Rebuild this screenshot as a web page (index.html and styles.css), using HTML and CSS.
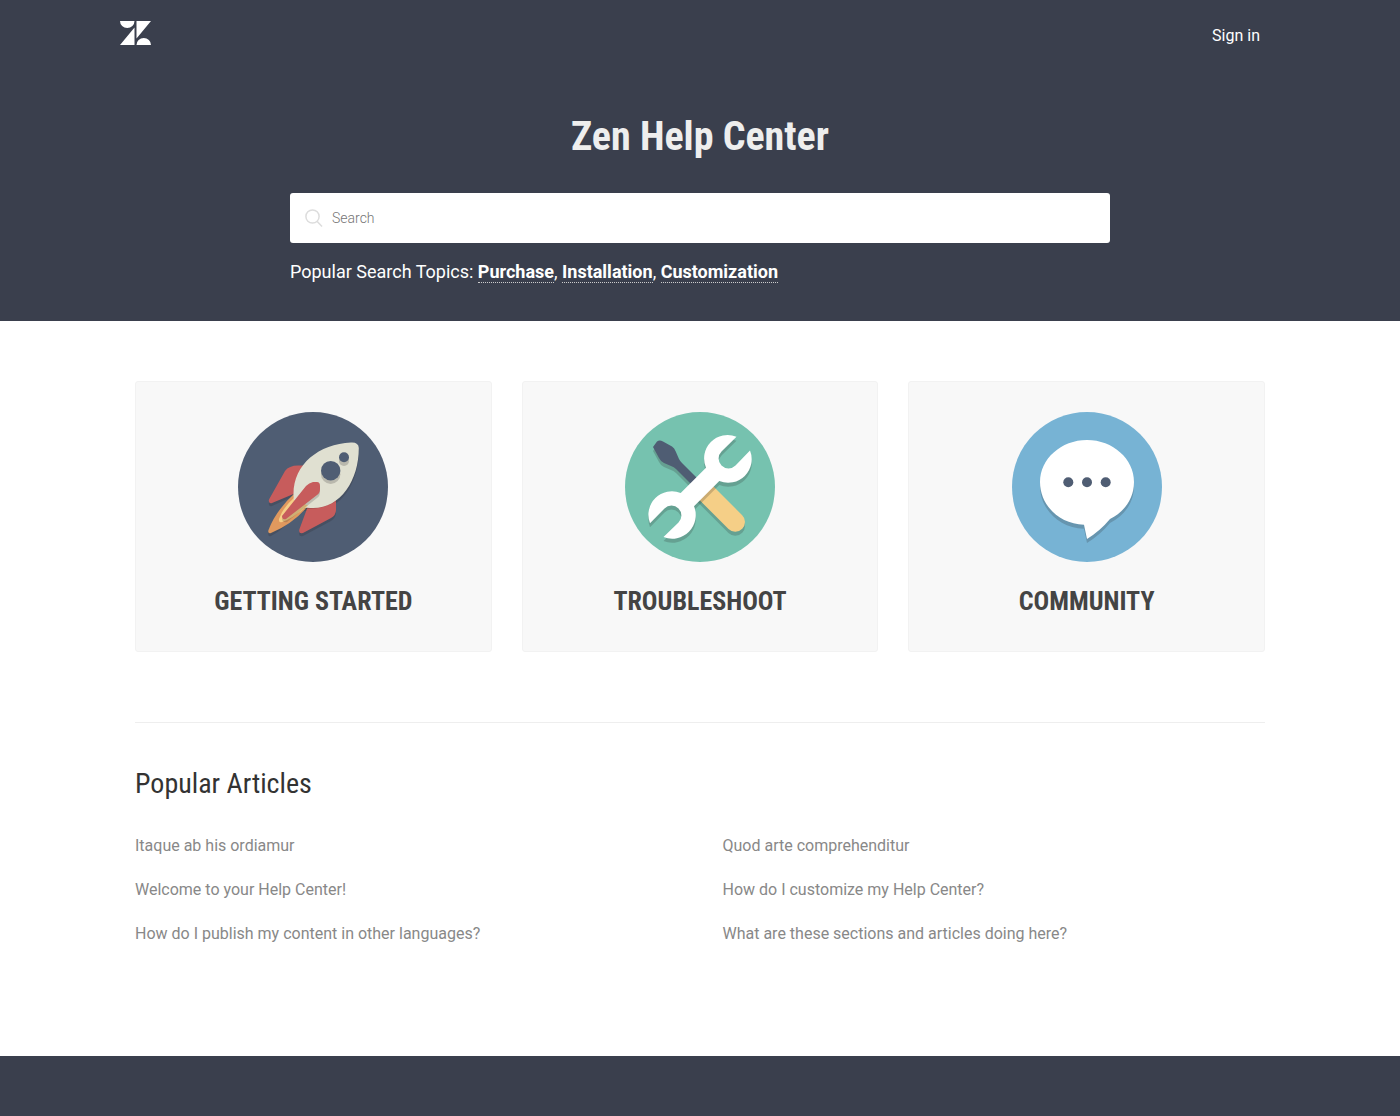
FILE: index.html
```html
<!DOCTYPE html>
<html lang="en">
<head>
<meta charset="utf-8">
<meta name="viewport" content="width=device-width, initial-scale=1">
<title>Zen Help Center</title>
<link rel="stylesheet" href="styles.css">
</head>
<body>
<header class="hero">
  <div class="topbar">
    <a class="logo" href="#" aria-label="Home">
      <svg width="32" height="26" viewBox="0 0 32 26" fill="#fff" aria-hidden="true">
        <path d="M0 1h14.500a7.250 7 0 0 1-14.500 0zM14.500 7.500V25H0zM16.500 1h14.500L16.500 18.500zM16.500 25a7.250 7 0 0 1 14.500 0z"/>
      </svg>
    </a>
    <a class="signin" href="#">Sign in</a>
  </div>
  <div class="hero-inner">
    <h1 class="hero-title">Zen Help Center</h1>
    <form class="search" role="search">
      <svg class="search-icon" width="18" height="18" viewBox="0 0 18 18" fill="none" stroke="#ddd" stroke-width="1.500" aria-hidden="true">
        <circle cx="7.500" cy="7.500" r="6.600"/><path d="M12 12.300l5 5.200"/>
      </svg>
      <input class="search-input" type="search" placeholder="Search" aria-label="Search">
    </form>
    <p class="topics">Popular Search Topics: <a href="#">Purchase</a>, <a href="#">Installation</a>, <a href="#">Customization</a></p>
  </div>
</header>

<main class="main">
  <nav class="cards" aria-label="Sections">
    <a class="card" href="#">
      <svg class="card-icon" viewBox="0 0 150 150" aria-hidden="true">
        <circle cx="75" cy="75" r="75" fill="#4f5d73"/>
        <g opacity=".2" transform="translate(0 3)" fill="#231f20">
          <path d="M64 53.500H57Q50 53.500 47 58L31 87.500Q30 92 34 91L58 80zM98 85V97Q98 103 93 106L65 121Q60 122 61.500 117L70 94z"/>
          <path d="M113 30.500Q120.500 30 120.800 36C120.800 68 103 96 75 96Q66 96.500 60 95Q46 115 33 121Q29.500 122 30.500 118Q38 98 55 83C55 52 81 32 113 30.500z"/>
        </g>
        <path fill="#c75c5c" d="M66 53.500H60Q51 53.500 47 59L31 87.500Q30 92 34 91L58 81zM98 84V98Q98 103 93 106L65 121Q60 122 61.500 117L70 94z"/>
        <path fill="#e0995e" d="M58 80Q38 98 30.500 118Q29.500 122 33 121Q55 112 71 93z"/>
        <path fill="#f5cf87" d="M57 85Q45 95 41 107Q40.500 111 44 110Q56 106 68 94z"/>
        <path fill="#231f20" opacity=".2" d="M56 84L56 90L61 94L67 97Q83 98 99 89L97 86z"/>
        <path fill="#e0e0d1" d="M113 30.500Q120.500 30 120.800 36C120.800 68 103 96 75 96Q67 96.500 58 94Q55.500 90 55.500 82C55.500 52 81 32 113 30.500z"/>
        <path fill="#f5cf87" d="M57 88L70 93.500L62 100L52 103L49 96z"/>
        <path fill="#231f20" opacity=".18" d="M75 73H79Q82 73 82 77V80Q82 84 79 86L49 110Q45 111 44 107L68 78Q71 74 75 73z"/>
        <path fill="#c75c5c" d="M75 70H79Q82 70 82 74V77Q82 81 79 83L48 107Q44 108 44 104L68 74Q71 71 75 70z"/>
        <g fill="#231f20" opacity=".2"><circle cx="92.700" cy="62.200" r="9.700"/><circle cx="106" cy="49" r="5"/></g>
        <g fill="#4f5d73"><circle cx="92.700" cy="58.700" r="9.700"/><circle cx="106" cy="45.300" r="5"/></g>
      </svg>
      <h2 class="card-title">GETTING STARTED</h2>
    </a>
    <a class="card" href="#">
      <svg class="card-icon" viewBox="0 0 150 150" aria-hidden="true">
        <defs>
          <path id="driver" d="M28 35L32 29.500Q34.500 27.500 38 29.500L47 34.500Q49.500 36 50.500 39L54 47Q55 49 57 51L76 70L70 76L51 57Q49 55 46 54L39 51Q36 50 34 46z"/>
          <path id="grip" d="M86 72L117 103A9.700 9.700 0 0 1 103.500 117L72.500 86z"/>
          <path id="wrench" d="M111.500 24.700L96.500 39.500A9.700 9.700 0 0 0 110.500 53.500L125 38.500A23.500 23.500 0 0 1 94.300 69L69 94.300A23.500 23.500 0 0 1 38.500 125L53.500 110.500A9.700 9.700 0 0 0 39.500 96.500L25 111.300A23.500 23.500 0 0 1 55.700 81L81 55.700A23.500 23.500 0 0 1 111.500 24.700z"/>
        </defs>
        <circle cx="75" cy="75" r="75" fill="#76c2af"/>
        <g fill="#231f20" opacity=".2" transform="translate(0 4)"><use href="#driver"/><use href="#grip"/></g>
        <use href="#driver" fill="#4f5d73"/>
        <use href="#grip" fill="#f5cf87"/>
        <use href="#wrench" fill="#231f20" opacity=".2" transform="translate(0 4)"/>
        <use href="#wrench" fill="#fff"/>
      </svg>
      <h2 class="card-title">TROUBLESHOOT</h2>
    </a>
    <a class="card" href="#">
      <svg class="card-icon" viewBox="0 0 150 150" aria-hidden="true">
        <defs>
          <path id="bubble" d="M75 28C101 28 122 47 122 70C122 87 112 100 98 107Q88 119 75 127L72 112.800C47 112 28 93 28 70C28 47 49 28 75 28z"/>
        </defs>
        <circle cx="75" cy="75" r="75" fill="#77b3d4"/>
        <use href="#bubble" fill="#231f20" opacity=".2" transform="translate(0 4)"/>
        <use href="#bubble" fill="#fff"/>
        <g fill="#4f5d73"><circle cx="56.300" cy="70.300" r="5"/><circle cx="75" cy="70.300" r="5"/><circle cx="93.700" cy="70.300" r="5"/></g>
      </svg>
      <h2 class="card-title">COMMUNITY</h2>
    </a>
  </nav>

  <section class="popular">
    <h2 class="popular-title">Popular Articles</h2>
    <ul class="articles">
      <li><a href="#">Itaque ab his ordiamur</a></li>
      <li><a href="#">Quod arte comprehenditur</a></li>
      <li><a href="#">Welcome to your Help Center!</a></li>
      <li><a href="#">How do I customize my Help Center?</a></li>
      <li><a href="#">How do I publish my content in other languages?</a></li>
      <li><a href="#">What are these sections and articles doing here?</a></li>
    </ul>
  </section>
</main>
<footer class="footer"></footer>
</body>
</html>
```
FILE: styles.css
```css
* { box-sizing: border-box; }

body {
  margin: 0;
  min-height: 100vh;
  display: flex;
  flex-direction: column;
  background: #fff;
  color: #333;
  font: 16px/24px Roboto, "Liberation Sans", sans-serif;
}

a { color: inherit; text-decoration: none; }
h1, h2, p, ul { margin: 0; padding: 0; }

.hero {
  background: #3a3f4d;
  color: #fff;
  padding-bottom: 36px;
}

.topbar {
  max-width: 1160px;
  height: 72px;
  margin: 0 auto;
  padding-right: 20px;
  display: flex;
  align-items: center;
  justify-content: space-between;
}

.logo { height: 32px; }
.logo svg { display: block; }

.hero-inner {
  max-width: 820px;
  margin: 0 auto;
  padding-top: 41px;
}

.hero-title {
  color: #eee;
  font: bold 40px/48px "Roboto Condensed", Roboto, sans-serif;
  text-align: center;
}

.search {
  display: flex;
  align-items: center;
  gap: 9px;
  height: 50px;
  margin-top: 32px;
  padding: 0 15px;
  background: #fff;
  border-radius: 3px;
}

.search-input {
  flex: 1;
  min-width: 0;
  height: 48px;
  padding: 0;
  border: 0;
  outline: 0;
  background: none;
  color: #444;
  font: 300 14px/20px Roboto, sans-serif;
}

.search-input::placeholder { color: #757575; }

.topics {
  margin-top: 16px;
  font-size: 18px;
  line-height: 26px;
}

.topics a {
  border-bottom: 1px dotted #ccc;
  font-weight: bold;
}

.main {
  width: 100%;
  max-width: 1170px;
  margin: 0 auto;
  padding: 60px 20px 110px;
}

.cards {
  display: grid;
  grid-template-columns: repeat(3, 1fr);
  gap: 30px;
}

.card {
  display: flex;
  flex-direction: column;
  align-items: center;
  padding: 30px 20px 34px;
  background: #f8f8f8;
  border: 1px solid #f2f2f2;
  border-radius: 3px;
}

.card-icon {
  width: 150px;
  height: 150px;
}

.card-title {
  margin-top: 23px;
  color: #444;
  font: bold 26px/32px "Roboto Condensed", Roboto, sans-serif;
}

.popular {
  margin-top: 70px;
  padding-top: 43px;
  border-top: 1px solid #eee;
}

.popular-title {
  font: 400 28px/36px "Roboto Condensed", Roboto, sans-serif;
}

.articles {
  display: grid;
  grid-template-columns: 1fr 1fr;
  gap: 20px 45px;
  margin-top: 32px;
  list-style: none;
  color: #888;
}

.footer {
  flex: 1;
  min-height: 60px;
  background: #3a3f4d;
}
```
